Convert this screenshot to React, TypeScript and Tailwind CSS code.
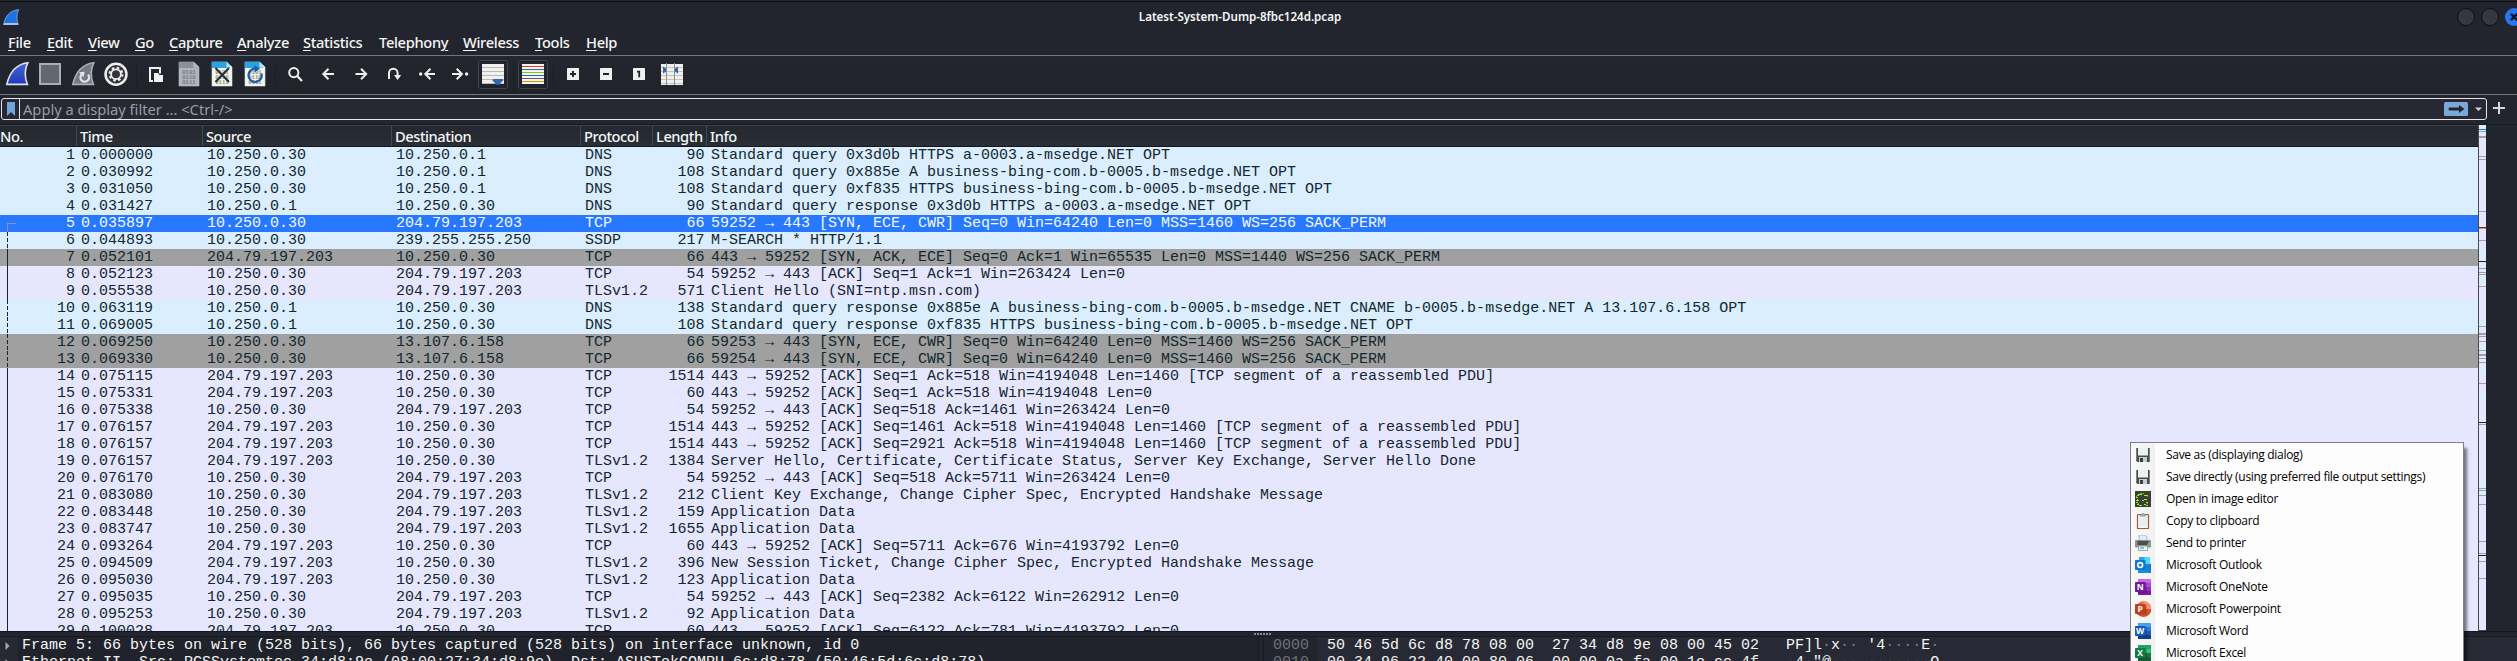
import type { ReactNode } from "react";

type Tone = "dns" | "sel" | "gray" | "tcp";
type Link = "" | "start" | "dash" | "solid";
type Packet = [string, string, string, string, string, string, Tone, Link];

const C = "10.250.0.30";
const D = "10.250.0.1";
const S = "204.79.197.203";
const B = "13.107.6.158";

const packets: Packet[] = [
  ["0.000000", C, D, "DNS", "90", "Standard query 0x3d0b HTTPS a-0003.a-msedge.NET OPT", "dns", ""],
  ["0.030992", C, D, "DNS", "108", "Standard query 0x885e A business-bing-com.b-0005.b-msedge.NET OPT", "dns", ""],
  ["0.031050", C, D, "DNS", "108", "Standard query 0xf835 HTTPS business-bing-com.b-0005.b-msedge.NET OPT", "dns", ""],
  ["0.031427", D, C, "DNS", "90", "Standard query response 0x3d0b HTTPS a-0003.a-msedge.NET OPT", "dns", ""],
  ["0.035897", C, S, "TCP", "66", "59252 → 443 [SYN, ECE, CWR] Seq=0 Win=64240 Len=0 MSS=1460 WS=256 SACK_PERM", "sel", "start"],
  ["0.044893", C, "239.255.255.250", "SSDP", "217", "M-SEARCH * HTTP/1.1", "dns", "dash"],
  ["0.052101", S, C, "TCP", "66", "443 → 59252 [SYN, ACK, ECE] Seq=0 Ack=1 Win=65535 Len=0 MSS=1440 WS=256 SACK_PERM", "gray", "solid"],
  ["0.052123", C, S, "TCP", "54", "59252 → 443 [ACK] Seq=1 Ack=1 Win=263424 Len=0", "tcp", "solid"],
  ["0.055538", C, S, "TLSv1.2", "571", "Client Hello (SNI=ntp.msn.com)", "tcp", "solid"],
  ["0.063119", D, C, "DNS", "138", "Standard query response 0x885e A business-bing-com.b-0005.b-msedge.NET CNAME b-0005.b-msedge.NET A 13.107.6.158 OPT", "dns", "dash"],
  ["0.069005", D, C, "DNS", "108", "Standard query response 0xf835 HTTPS business-bing-com.b-0005.b-msedge.NET OPT", "dns", "dash"],
  ["0.069250", C, B, "TCP", "66", "59253 → 443 [SYN, ECE, CWR] Seq=0 Win=64240 Len=0 MSS=1460 WS=256 SACK_PERM", "gray", "dash"],
  ["0.069330", C, B, "TCP", "66", "59254 → 443 [SYN, ECE, CWR] Seq=0 Win=64240 Len=0 MSS=1460 WS=256 SACK_PERM", "gray", "dash"],
  ["0.075115", S, C, "TCP", "1514", "443 → 59252 [ACK] Seq=1 Ack=518 Win=4194048 Len=1460 [TCP segment of a reassembled PDU]", "tcp", "solid"],
  ["0.075331", S, C, "TCP", "60", "443 → 59252 [ACK] Seq=1 Ack=518 Win=4194048 Len=0", "tcp", "solid"],
  ["0.075338", C, S, "TCP", "54", "59252 → 443 [ACK] Seq=518 Ack=1461 Win=263424 Len=0", "tcp", "solid"],
  ["0.076157", S, C, "TCP", "1514", "443 → 59252 [ACK] Seq=1461 Ack=518 Win=4194048 Len=1460 [TCP segment of a reassembled PDU]", "tcp", "solid"],
  ["0.076157", S, C, "TCP", "1514", "443 → 59252 [ACK] Seq=2921 Ack=518 Win=4194048 Len=1460 [TCP segment of a reassembled PDU]", "tcp", "solid"],
  ["0.076157", S, C, "TLSv1.2", "1384", "Server Hello, Certificate, Certificate Status, Server Key Exchange, Server Hello Done", "tcp", "solid"],
  ["0.076170", C, S, "TCP", "54", "59252 → 443 [ACK] Seq=518 Ack=5711 Win=263424 Len=0", "tcp", "solid"],
  ["0.083080", C, S, "TLSv1.2", "212", "Client Key Exchange, Change Cipher Spec, Encrypted Handshake Message", "tcp", "solid"],
  ["0.083448", C, S, "TLSv1.2", "159", "Application Data", "tcp", "solid"],
  ["0.083747", C, S, "TLSv1.2", "1655", "Application Data", "tcp", "solid"],
  ["0.093264", S, C, "TCP", "60", "443 → 59252 [ACK] Seq=5711 Ack=676 Win=4193792 Len=0", "tcp", "solid"],
  ["0.094509", S, C, "TLSv1.2", "396", "New Session Ticket, Change Cipher Spec, Encrypted Handshake Message", "tcp", "solid"],
  ["0.095030", S, C, "TLSv1.2", "123", "Application Data", "tcp", "solid"],
  ["0.095035", C, S, "TCP", "54", "59252 → 443 [ACK] Seq=2382 Ack=6122 Win=262912 Len=0", "tcp", "solid"],
  ["0.095253", C, S, "TLSv1.2", "92", "Application Data", "tcp", "solid"],
  ["0.100028", S, C, "TCP", "60", "443 → 59252 [ACK] Seq=6122 Ack=781 Win=4193792 Len=0", "tcp", "solid"],
];

const tones: Record<Tone, string> = {
  dns: "bg-[#daeeff] text-[#12272e]",
  sel: "bg-[#2778ff] text-[#f4f8ff]",
  gray: "bg-[#a0a0a0] text-[#12272e]",
  tcp: "bg-[#e7e6ff] text-[#12272e]",
};

const links: Record<Link, string> = {
  "": "",
  start: "mt-2 h-[9px] w-[9px] border-t border-l border-[#8f959c]",
  dash: "h-[17px] w-px bg-[repeating-linear-gradient(to_bottom,#12272e_0px,#12272e_4px,transparent_4px,transparent_6px)]",
  solid: "h-[17px] w-px bg-[#12272e]",
};

const cols = "grid grid-cols-[76px_126px_189px_189px_72px_54px_1fr]";

function PacketRow({ n, p }: { n: number; p: Packet }) {
  const [time, src, dst, proto, len, info, tone, link] = p;
  return (
    <div className={`${cols} h-[17px] shrink-0 whitespace-pre ${tones[tone]}`}>
      <div className="flex justify-between pl-[7px] pr-[1px]">
        <span className={links[link]} />
        <span>{n}</span>
      </div>
      <span className="pl-[5px]">{time}</span>
      <span className="pl-[5px]">{src}</span>
      <span className="pl-[5px]">{dst}</span>
      <span className="pl-[5px]">{proto}</span>
      <span className="pr-[1.5px] text-right">{len}</span>
      <span className="pl-[5px]">{info}</span>
    </div>
  );
}

const menus: [string, number, string][] = [
  ["File", 0, "w-[39px]"],
  ["Edit", 0, "w-[41px]"],
  ["View", 0, "w-[47px]"],
  ["Go", 0, "w-[34px]"],
  ["Capture", 0, "w-[68px]"],
  ["Analyze", 0, "w-[66px]"],
  ["Statistics", 0, "w-[76px]"],
  ["Telephony", 8, "w-[84px]"],
  ["Wireless", 0, "w-[72px]"],
  ["Tools", 0, "w-[51px]"],
  ["Help", 0, "w-[40px]"],
];

const Cell = ({ children }: { children: ReactNode }) => (
  <svg className="h-[38px] w-[33px] shrink-0" viewBox="0 0 33 38" fill="none">
    {children}
  </svg>
);

const Sep = () => (
  <div className="flex w-[7px] shrink-0 items-center justify-center">
    <div className="h-5 w-px bg-[#1b1d24]" />
  </div>
);

const finPath = "M5.8 28.4 C8.5 16.5 14.5 8.3 26.8 6.7 C23.6 13.5 23.8 22 26.4 28.4 Z";

function Sheet({ top, body, ink, edge }: { top: string; body: string; ink: string; edge: string }) {
  return (
    <>
      <path d="M6 6 H21 L26 11 V30 H6 Z" fill={body} stroke={edge} strokeWidth="0.6" />
      <path d="M6 6 H21 L24 9 L24 12 H6 Z" fill={top} />
      <path d="M20.5 6.3 L25.7 11.5 H20.5 Z" fill={edge} />
      <g fill={ink} fontFamily="Liberation Mono" fontSize="5.6" fontWeight="700">
        <text x="9.2" y="18">0101</text>
        <text x="9.2" y="23">0110</text>
        <text x="9.2" y="28">0111</text>
      </g>
    </>
  );
}

function Toolbar() {
  const w = "#f0f0ee";
  return (
    <div className="flex h-[38px] bg-gradient-to-b from-[#24262f] to-[#20232a] pl-px">
      <Cell>
        <defs>
          <linearGradient id="fin" x1="0" y1="0" x2="0" y2="1">
            <stop offset="0" stopColor="#4467d8" />
            <stop offset="1" stopColor="#2238b8" />
          </linearGradient>
        </defs>
        <path d={finPath} fill="url(#fin)" stroke="#dde2e6" strokeWidth="1.6" />
      </Cell>
      <Cell>
        <rect x="6" y="8" width="20" height="20" fill="#63676e" stroke="#a7aeb8" strokeWidth="2" />
      </Cell>
      <Cell>
        <path d={finPath} fill="#757a83" stroke="#a7aeb8" strokeWidth="1.6" />
        <path d="M14.6 18.5 A4.3 4.3 0 1 0 21 18.6" stroke="#e4e6ea" strokeWidth="2.2" />
        <path d="M12 16.2 L17.6 15.8 L16.6 21.2 Z" fill="#e4e6ea" />
      </Cell>
      <Cell>
        <circle cx="16" cy="18.2" r="11.7" fill={w} />
        <circle cx="16" cy="18.2" r="9.2" fill="#33353a" />
        <circle cx="16" cy="18.2" r="6.4" stroke={w} strokeWidth="2" strokeDasharray="2.5 2.53" />
        <circle cx="16" cy="18.2" r="4.9" stroke={w} strokeWidth="1.8" />
      </Cell>
      <Sep />
      <Cell>
        <path d="M13 25 H10 V12 H20 V17.5" stroke={w} strokeWidth="2" />
        <path d="M14 17 H18 L19.5 19 H23 V26 H14 Z" fill={w} />
      </Cell>
      <Cell>
        <Sheet top="#8c9099" body="#b0b4bc" ink="#747882" edge="#b9bdc5" />
      </Cell>
      <Cell>
        <Sheet top="#2ba3e3" body="#f6f7e9" ink="#8d8f88" edge="#c8e4f3" />
        <path d="M9.5 12 L23 26 M23 12 L9.5 26" stroke="#26303c" strokeWidth="2.1" />
      </Cell>
      <Cell>
        <Sheet top="#2ba3e3" body="#f6f7e9" ink="#8d8f88" edge="#c8e4f3" />
        <path d="M17 12.8 A6.6 6.6 0 1 0 22.4 17.5" stroke="#1f5aa8" strokeWidth="2.3" />
        <path d="M15.5 9.2 L21 12.8 L15.5 16.4 Z" fill="#1f5aa8" />
      </Cell>
      <Sep />
      <Cell>
        <circle cx="14.8" cy="16.6" r="4.6" stroke={w} strokeWidth="2" />
        <path d="M18.2 20 L23 25" stroke={w} strokeWidth="2.2" />
      </Cell>
      <Cell>
        <path d="M22 18 H12 M16.5 12.8 L11.3 18 L16.5 23.2" stroke={w} strokeWidth="2" />
      </Cell>
      <Cell>
        <path d="M10.5 18 H20.5 M16 12.8 L21.2 18 L16 23.2" stroke={w} strokeWidth="2" />
      </Cell>
      <Cell>
        <path d="M11 23 V17 A4.3 4.3 0 0 1 19.6 17 V20" stroke={w} strokeWidth="2" />
        <path d="M16 19 H23.2 L19.6 24 Z" fill={w} />
      </Cell>
      <Cell>
        <path d="M24 18 H15 M19.5 12.8 L14.3 18 L19.5 23.2" stroke={w} strokeWidth="2" />
        <circle cx="9.7" cy="18" r="1.7" fill={w} />
      </Cell>
      <Cell>
        <path d="M8 18 H17 M12.7 12.8 L17.9 18 L12.7 23.2" stroke={w} strokeWidth="2" />
        <circle cx="22.6" cy="18" r="1.7" fill={w} />
      </Cell>
      <Cell>
        <rect x="1.5" y="4.5" width="29" height="28" rx="2" fill="#20232a" stroke="#41454d" />
        <rect x="5" y="8" width="22" height="20" fill="#f1f1ed" />
        <path d="M5 11.5 H27 M5 15.5 H27 M5 19.5 H27 M5 23.5 H27 M5 27.5 H27" stroke="#b9bab6" />
        <path d="M15 24 Q16 22.8 18 23 H24 Q26 22.8 26.5 24 L22 28.8 H19.5 Z" fill="#3566ac" />
      </Cell>
      <Sep />
      <Cell>
        <rect x="1.5" y="4.5" width="29" height="28" rx="2" fill="#20232a" stroke="#41454d" />
        <rect x="5" y="8" width="22" height="20" fill="#f4f4f0" />
        <path d="M5 10.5 H27" stroke="#ee3524" />
        <path d="M5 13.5 H27 M5 19.5 H27" stroke="#3465a4" />
        <path d="M5 16.5 H27" stroke="#73d216" />
        <path d="M5 22.5 H27" stroke="#75507b" />
        <path d="M5 25.5 H27" stroke="#c9a000" />
      </Cell>
      <Sep />
      <Cell>
        <rect x="10" y="12" width="12" height="12" rx="0.6" fill={w} />
        <path d="M16 15 V21 M13 18 H19" stroke="#22252d" strokeWidth="2" />
      </Cell>
      <Cell>
        <rect x="10" y="12" width="12" height="12" rx="0.6" fill={w} />
        <path d="M13 18 H19" stroke="#22252d" strokeWidth="2" />
      </Cell>
      <Cell>
        <rect x="10" y="12" width="12" height="12" rx="0.6" fill={w} />
        <path d="M14 15.6 H16.2 V21.2" stroke="#22252d" strokeWidth="1.8" />
      </Cell>
      <Cell>
        <rect x="5" y="8" width="22" height="21" fill="#efefeb" />
        <path d="M5 11.5 H27 M5 15.5 H27 M5 19.5 H27 M5 23.5 H27 M5 27.5 H27" stroke="#c3c4c0" />
        <path d="M10.5 7 V29 M18.5 7 V29" stroke="#8b8d88" />
        <path d="M7 10.5 L10 12.5 V15.5 L7 17.5 Z M22 10.5 V17.5 L19 15.5 V12.5 Z" fill="#3566ac" />
      </Cell>
    </div>
  );
}

const zones: [number, number][] = [[0, 6], [7, 3], [124, 8], [139, 10], [152, 9], [194, 8], [202, 4], [221, 7], [234, 3], [243, 6], [268, 7], [355, 7], [366, 5]];
const marks: [number, number, string][] = [
  [4, 1, "#2778ff"], [6, 1, "#a0a0a0"], [11, 2, "#a0a0a0"], [31, 1, "#a0a0a0"], [34, 1, "#a0a0a0"],
  [86, 1, "#a0a0a0"], [102, 1, "#b40d0d"], [103, 1, "#a0a0a0"], [115, 1, "#a0a0a0"], [136, 1, "#12272e"],
  [143, 1, "#a0a0a0"], [147, 1, "#a0a0a0"], [149, 1, "#a0a0a0"], [161, 1, "#a0a0a0"], [201, 1, "#a0a0a0"],
  [208, 2, "#a0a0a0"], [211, 1, "#a0a0a0"], [216, 1, "#a0a0a0"], [225, 1, "#a0a0a0"], [229, 2, "#a0a0a0"],
  [233, 1, "#a0a0a0"], [237, 1, "#a0a0a0"], [258, 1, "#a0a0a0"], [297, 1, "#12272e"], [299, 1, "#a0a0a0"],
  [363, 1, "#a0a0a0"], [365, 1, "#a0a0a0"], [370, 1, "#a0a0a0"], [379, 1, "#a0a0a0"], [416, 1, "#a0a0a0"],
  [428, 1, "#a0a0a0"], [430, 1, "#12272e"], [436, 1, "#a0a0a0"], [453, 1, "#a0a0a0"],
];

const Minimap = () => (
  <svg className="h-[506px] w-2 shrink-0" viewBox="0 0 8 506" shapeRendering="crispEdges">
    <rect width="8" height="506" fill="#48494d" />
    <rect x="1" width="7" height="505" fill="#e7e6ff" />
    {zones.map(([y, h]) => (
      <rect key={y} x="1" y={y} width="7" height={h} fill="#daeeff" />
    ))}
    {marks.map(([y, h, c]) => (
      <rect key={y} x="1" y={y} width="7" height={h} fill={c} />
    ))}
  </svg>
);

const Floppy = () => (
  <>
    <path d="M1 1 H15 V15 H2.5 L1 13.5 Z" fill="#4a4d50" />
    <rect x="3" y="1" width="10" height="7" fill="#e9f1f1" />
    <rect x="3" y="8" width="10" height="1" fill="#9aa0a3" />
    <rect x="4" y="10" width="8" height="5" fill="#c9cdd0" />
    <rect x="5" y="11" width="3" height="4" fill="#3b3e41" />
    <path d="M1.5 1 V13.4 M14.5 1 V15" stroke="#7a7e82" />
  </>
);

function Office({ c, bg, letter, round }: { c: string[]; bg: string; letter: string; round?: boolean }) {
  return (
    <>
      {round ? (
        <>
          <circle cx="8.5" cy="8" r="7.8" fill={c[0]} />
          <path d="M8.5 .2 A7.8 7.8 0 0 1 16.3 8 H8.5 Z" fill={c[1]} />
          <path d="M.7 8 H16.3 A7.8 7.8 0 0 1 .7 8 Z" fill={c[2]} />
        </>
      ) : (
        <>
          <rect x="3" y="0" width="13" height="4" fill={c[0]} />
          <rect x="3" y="4" width="13" height="4" fill={c[1]} />
          <rect x="3" y="8" width="13" height="4" fill={c[2]} />
          <rect x="3" y="12" width="13" height="4" fill={c[3]} />
        </>
      )}
      <rect x="2" y="3.6" width="9.6" height="10" fill="#000" opacity="0.25" />
      <rect x="0" y="3" width="10.5" height="10" rx="0.8" fill={bg} />
      <text x="5.2" y="11" textAnchor="middle" fontFamily="Open Sans" fontWeight="700" fontSize="8.5" fill="#fff">
        {letter}
      </text>
    </>
  );
}

const actions: [string, ReactNode][] = [
  ["Save as (displaying dialog)", <Floppy />],
  ["Save directly (using preferred file output settings)", <Floppy />],
  [
    "Open in image editor",
    <g shapeRendering="crispEdges">
      <rect width="16" height="16" fill="#3d3d3d" />
      <path d="M3 3.5 H7 M2 4.5 H4 M9 4.5 H13 M1 6.5 H3 M2 8.5 H3 M1 9.5 H4 M9 8.5 H12 M7 9.5 H9 M1 11.5 H3 M2 13.5 H4 M11 11.5 H13 M9 13.5 H11 M4 14.5 H7 M11 14.5 H13" stroke="#8cff00" />
      <path d="M5 2.5 H9 M1 5.5 H2 M12 5.5 H13 M3 12.5 H4 M12 12.5 H13" stroke="#5fae06" />
    </g>,
  ],
  [
    "Copy to clipboard",
    <>
      <rect x="2.5" y="1.5" width="11" height="14" rx="0.6" fill="#f3fafa" stroke="#9c5a35" strokeWidth="1.2" />
      <rect x="4" y="3" width="8" height="11" fill="#e6f1f2" />
      <path d="M4.5 1.5 H6.5 V0 H9.5 V1.5 H11.5 V3.5 H4.5 Z" fill="#a5a9ab" />
    </>,
  ],
  [
    "Send to printer",
    <>
      <path d="M4 0 H10 L12 2 V7 H4 Z" fill="#dcebf5" stroke="#9bb0bf" strokeWidth="0.8" />
      <rect x="0" y="5" width="16" height="7.5" rx="1" fill="#8f9295" />
      <rect x="2.5" y="6" width="11" height="4" fill="#4b4e52" />
      <rect x="3.5" y="11" width="9" height="4.5" fill="#edf6ee" stroke="#8c9693" strokeWidth="0.8" />
      <path d="M5 13 H9" stroke="#2f7fd0" />
      <rect x="12.5" y="8.5" width="2" height="1.4" fill="#55e04c" />
    </>,
  ],
  [
    "Microsoft Outlook",
    <>
      <rect x="4" y="0" width="11" height="9" fill="#28a8ea" />
      <rect x="9.5" y="0" width="5.5" height="8" fill="#50d9ff" />
      <path d="M3 7 L16 7 V16 H3 Z" fill="#1490df" />
      <path d="M16 6.5 V16 L7 11 Z" fill="#1a7fc9" />
      <rect x="0" y="3" width="10.5" height="10" rx="0.8" fill="#0f78d0" />
      <circle cx="5.2" cy="8" r="2.4" fill="none" stroke="#fff" strokeWidth="1.6" />
    </>,
  ],
  ["Microsoft OneNote", <Office c={["#ca64ea", "#ae4bd5", "#9332bf", "#7719aa"]} bg="#6a1b9e" letter="N" />],
  ["Microsoft Powerpoint", <Office round c={["#ed6c47", "#ff8f6b", "#d35230"]} bg="#c43e1c" letter="P" />],
  ["Microsoft Word", <Office c={["#41a5ee", "#2b7cd3", "#185abd", "#103f91"]} bg="#185abd" letter="W" />],
  ["Microsoft Excel", <Office c={["#21a366", "#33c481", "#107c41", "#185c37"]} bg="#107c41" letter="X" />],
];

function ActionMenu() {
  return (
    <div className="absolute left-[2130px] top-[442px] h-[260px] w-[334px] border border-[#808080] bg-[linear-gradient(to_right,#f9f9f9,#f1f1f1_24px,#fdfdfd_24px)] pt-px shadow-[4px_5px_3px_-1px_rgba(0,0,0,0.5)]">
      {actions.map(([label, icon]) => (
        <div key={label} className="flex h-[22px] items-center pl-1">
          <svg className="size-4 shrink-0" viewBox="0 0 16 16">
            {icon}
          </svg>
          <span className="ml-[15px] whitespace-pre font-['Open_Sans',sans-serif] text-[12px] leading-[22px] tracking-[-0.3px] text-black">
            {label}
          </span>
        </div>
      ))}
    </div>
  );
}

const Ascii = ({ text }: { text: string }) => (
  <span>
    {[...text].map((ch, i) => (
      <span key={i} className={ch === "·" ? "text-[#7b7d84]" : ""}>
        {ch}
      </span>
    ))}
  </span>
);

const hex = [
  ["0000", "50 46 5d 6c d8 78 08 00  27 34 d8 9e 08 00 45 02", "PF]l·x·· '4····E·"],
  ["0010", "00 34 96 22 40 00 80 06  00 00 0a fa 00 1e cc 4f", "·4·\"@··· ·······O"],
];

const details = [
  "Frame 5: 66 bytes on wire (528 bits), 66 bytes captured (528 bits) on interface unknown, id 0",
  "Ethernet II, Src: PCSSystemtec_34:d8:9e (08:00:27:34:d8:9e), Dst: ASUSTekCOMPU_6c:d8:78 (50:46:5d:6c:d8:78)",
];

export default function App() {
  return (
    <div className="relative flex h-[661px] w-[2517px] flex-col overflow-hidden bg-[#22252d] font-['Noto_Sans',sans-serif] text-[14.67px] text-[#f6f6f6]">
      <div className="mt-px h-px shrink-0 bg-[#0c0d11]" />
      <div className="grid h-[30px] shrink-0 grid-cols-[1fr_auto_1fr]">
        <svg className="ml-[3px] mt-[7px] h-[17px] w-[17px]" viewBox="0 0 17 17">
          <path d="M.6 15.5 C2 8 6 1.5 15.8 .6 C13.5 5 13.6 11 15.2 15.5 Z" fill="#1c74e4" stroke="#8db9e8" strokeWidth="0.7" />
          <path d="M1 14 H15 L15.3 16 H.5 Z" fill="#a9c3df" />
        </svg>
        <span className="-ml-[37px] mt-[5px] text-[11.6px] font-semibold leading-[20px] tracking-[-0.02px]">
          Latest-System-Dump-8fbc124d.pcap
        </span>
        <div className="flex justify-end gap-[6px] pt-[6px]">
          <div className="size-[18px] shrink-0 rounded-full border border-[#0d0e12] bg-[#343842]" />
          <div className="size-[18px] shrink-0 rounded-full border border-[#0d0e12] bg-[#343842]" />
          <div className="-mr-[6px] size-[18px] shrink-0 rounded-full bg-[#2476f5]">
            <svg viewBox="0 0 18 18">
              <path d="M5.8 5.8 L12.2 12.2 M12.2 5.8 L5.8 12.2" stroke="#0c1424" strokeWidth="2.4" />
            </svg>
          </div>
        </div>
      </div>
      <nav className="flex h-[23px] shrink-0 pl-2 font-medium leading-[20px] tracking-[-0.33px]">
        {menus.map(([label, k, w]) => (
          <span key={label} className={`${w} whitespace-pre`}>
            {label.slice(0, k)}
            <span className="underline decoration-1 underline-offset-[2px]">{label[k]}</span>
            {label.slice(k + 1)}
          </span>
        ))}
      </nav>
      <div className="h-px shrink-0 bg-[#73767c]" />
      <Toolbar />
      <div className="h-px shrink-0 bg-[#73767c]" />

      <div className="flex h-[29px] shrink-0 items-start bg-[#22252d] pl-px pt-[3px]">
        <div className="flex h-[22px] w-[2486px] items-center rounded-[3px] border border-[#e6e6e4] bg-[#262933]">
          <div className="flex h-full w-[18px] items-center justify-center border-r border-[#e6e6e4]">
            <svg className="h-[14px] w-2" viewBox="0 0 8 14">
              <path d="M0 0 H8 V14 L4 10 L0 14 Z" fill="#74a5d8" />
            </svg>
          </div>
          <span className="ml-[3px] grow leading-[20px] text-[#9a9ca0]">Apply a display filter ... &lt;Ctrl-/&gt;</span>
          <svg className="mr-[7px] h-[14px] w-6" viewBox="0 0 24 14">
            <rect width="24" height="14" rx="1.5" fill="#7ba8d8" />
            <path d="M5 5.5 H15 V3 L20.5 7 L15 11 V8.5 H5 Q4 7 5 5.5 Z" fill="#23262e" />
          </svg>
          <svg className="mr-1 h-2 w-[7px]" viewBox="0 0 7 8">
            <path d="M0 2.5 H7 L3.5 6 Z" fill="#d6d6d4" />
          </svg>
        </div>
        <svg className="ml-[6px] mt-1 size-3" viewBox="0 0 12 12">
          <path d="M6 0 V12 M0 6 H12" stroke="#d8d8d6" strokeWidth="2" />
        </svg>
      </div>
      <div className="h-px shrink-0 bg-[#191b21]" />

      <div className="flex h-[506px] shrink-0">
        <div className="flex w-[2478px] flex-col overflow-hidden">
          <div className={`${cols} h-[22px] shrink-0 border-b border-b-[#14161a] border-t border-t-[#3b4046] bg-gradient-to-b from-[#242830] to-[#2a2e35] font-medium leading-[20px] tracking-[-0.45px]`}>
            {["No.", "Time", "Source", "Destination", "Protocol", "Length", "Info"].map((h, i) => (
              <span key={h} className={i ? "border-l border-[#44484f] pl-[3px]" : ""}>
                {h}
              </span>
            ))}
          </div>
          <div className="flex grow flex-col overflow-hidden font-['Liberation_Mono',monospace] text-[15px] leading-[17px]">
            {packets.map((p, i) => (
              <PacketRow key={i} n={i + 1} p={p} />
            ))}
          </div>
        </div>
        <Minimap />
      </div>

      <div className="flex h-[5px] shrink-0 items-center border-t border-[#14161b] pl-[1254px]">
        <div className="h-[2px] w-[17px] bg-[repeating-linear-gradient(to_right,#85878c_0px,#85878c_2px,transparent_2px,transparent_3px)]" />
      </div>
      <div className="flex h-[25px] shrink-0 overflow-hidden border-t border-[#191b20] font-['Liberation_Mono',monospace] text-[15px] leading-[17px]">
        <div className="w-[1259px] border-r border-[#191b20] bg-[linear-gradient(to_right,#262932_18px,#20232b_18px)]">
          {details.map((d) => (
            <div key={d} className="flex h-[17px] items-center whitespace-pre">
              <svg className="ml-[5px] mr-3 h-2 w-[5px]" viewBox="0 0 5 8">
                <path d="M0.5 0 L4.5 4 L0.5 8 Z" fill="#a5a7ab" />
              </svg>
              {d}
            </div>
          ))}
        </div>
        <div className="w-1" />
        <div className="grow border-l border-[#191b20] bg-[linear-gradient(to_right,#22252d_54px,#272a34_54px)] pl-[9px]">
          {hex.map(([off, bytes, ascii]) => (
            <div key={off} className="flex h-[17px] whitespace-pre">
              <span className="w-[54px] text-[#6e7178]">{off}</span>
              <span className="w-[459px]">{bytes}</span>
              <Ascii text={ascii} />
            </div>
          ))}
        </div>
      </div>

      <ActionMenu />
    </div>
  );
}
